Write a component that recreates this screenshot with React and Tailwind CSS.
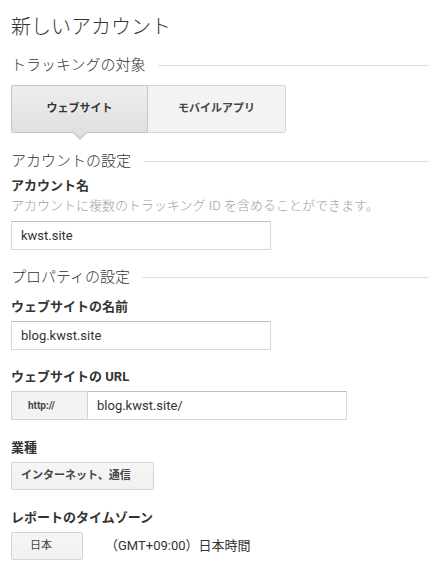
import React from "react";

const font = { fontFamily: "Roboto, 'Noto Sans CJK JP', sans-serif" };

function Section({ title }) {
  return (
    <div className="flex items-center gap-3 h-[18px]">
      <h2 className="text-[15px] font-light text-[#333] leading-none whitespace-nowrap">{title}</h2>
      <div className="flex-1 h-px bg-[#e0e0e0]" />
    </div>
  );
}

function Label({ children }) {
  return <div className="text-[13px] font-bold text-[#333] leading-none">{children}</div>;
}

function GrayButton({ children, className = "" }) {
  return (
    <div
      className={
        "h-[28px] flex items-center border border-[#d4d4d4] rounded-[2px] bg-gradient-to-b from-[#f5f5f5] to-[#f1f1f1] text-[11px] font-bold text-[#444] " +
        className
      }
    >
      {children}
    </div>
  );
}

function TextInput({ value, className = "" }) {
  return (
    <div className={"h-[29px] flex items-center px-[9px] border border-[#d9d9d9] border-t-[#c0c0c0] bg-white text-[13px] text-[#333] " + className}>
      {value}
    </div>
  );
}

export default function App() {
  return (
    <div className="w-[429px] h-[579px] bg-white pl-[11px] pt-[14px] overflow-hidden" style={font}>
      <h1 className="text-[20px] font-light text-[#333] leading-[26px]">新しいアカウント</h1>

      <div className="mt-[16px]">
        <Section title="トラッキングの対象" />
      </div>

      {/* トラッキング対象の切り替え */}
      <div className="mt-[11px] flex">
        <div className="relative w-[137px] h-[48px] flex items-center justify-center border border-[#c6c6c6] rounded-l-[2px] bg-gradient-to-b from-[#eeeeee] to-[#e0e0e0] text-[11px] font-bold text-[#333]">
          ウェブサイト
          <div className="absolute left-1/2 -translate-x-1/2 -bottom-[8px] w-0 h-0 border-l-[7px] border-r-[7px] border-t-[7px] border-l-transparent border-r-transparent border-t-[#c6c6c6]" />
          <div className="absolute left-1/2 -translate-x-1/2 -bottom-[6px] w-0 h-0 border-l-[6px] border-r-[6px] border-t-[6px] border-l-transparent border-r-transparent border-t-[#e0e0e0]" />
        </div>
        <div className="w-[138px] h-[48px] flex items-center justify-center border border-l-0 border-[#d4d4d4] rounded-r-[2px] bg-[#f3f3f3] text-[11px] font-bold text-[#444]">
          モバイルアプリ
        </div>
      </div>

      <div className="mt-[19px]">
        <Section title="アカウントの設定" />
      </div>

      <div className="mt-[9px]">
        <Label>アカウント名</Label>
        <div className="mt-[7px] text-[13px] text-[#a0a0a0] font-light leading-none">
          アカウントに複数のトラッキング ID を含めることができます。
        </div>
        <TextInput value="kwst.site" className="mt-[9px] w-[260px]" />
      </div>

      <div className="mt-[18px]">
        <Section title="プロパティの設定" />
      </div>

      <div className="mt-[14px]">
        <Label>ウェブサイトの名前</Label>
        <TextInput value="blog.kwst.site" className="mt-[8px] w-[260px]" />
      </div>

      <div className="mt-[20px]">
        <Label>ウェブサイトの URL</Label>
        <div className="mt-[8px] flex">
          <div className="w-[77px] h-[29px] flex items-center pl-[16px] border border-[#d4d4d4] bg-[#f3f3f3] text-[10px] font-bold text-[#444]">
            http://
          </div>
          <TextInput value="blog.kwst.site/" className="w-[259px] border-l-0" />
        </div>
      </div>

      <div className="mt-[21px]">
        <Label>業種</Label>
        <GrayButton className="mt-[8px] w-[143px] pl-[9px]">インターネット、通信</GrayButton>
      </div>

      <div className="mt-[21px]">
        <Label>レポートのタイムゾーン</Label>
        <div className="mt-[8px] flex items-center">
          <GrayButton className="w-[72px] pl-[18px] font-normal">日本</GrayButton>
          <div className="ml-[22px] text-[13px] text-[#333]">（GMT+09:00）日本時間</div>
        </div>
      </div>
    </div>
  );
}
